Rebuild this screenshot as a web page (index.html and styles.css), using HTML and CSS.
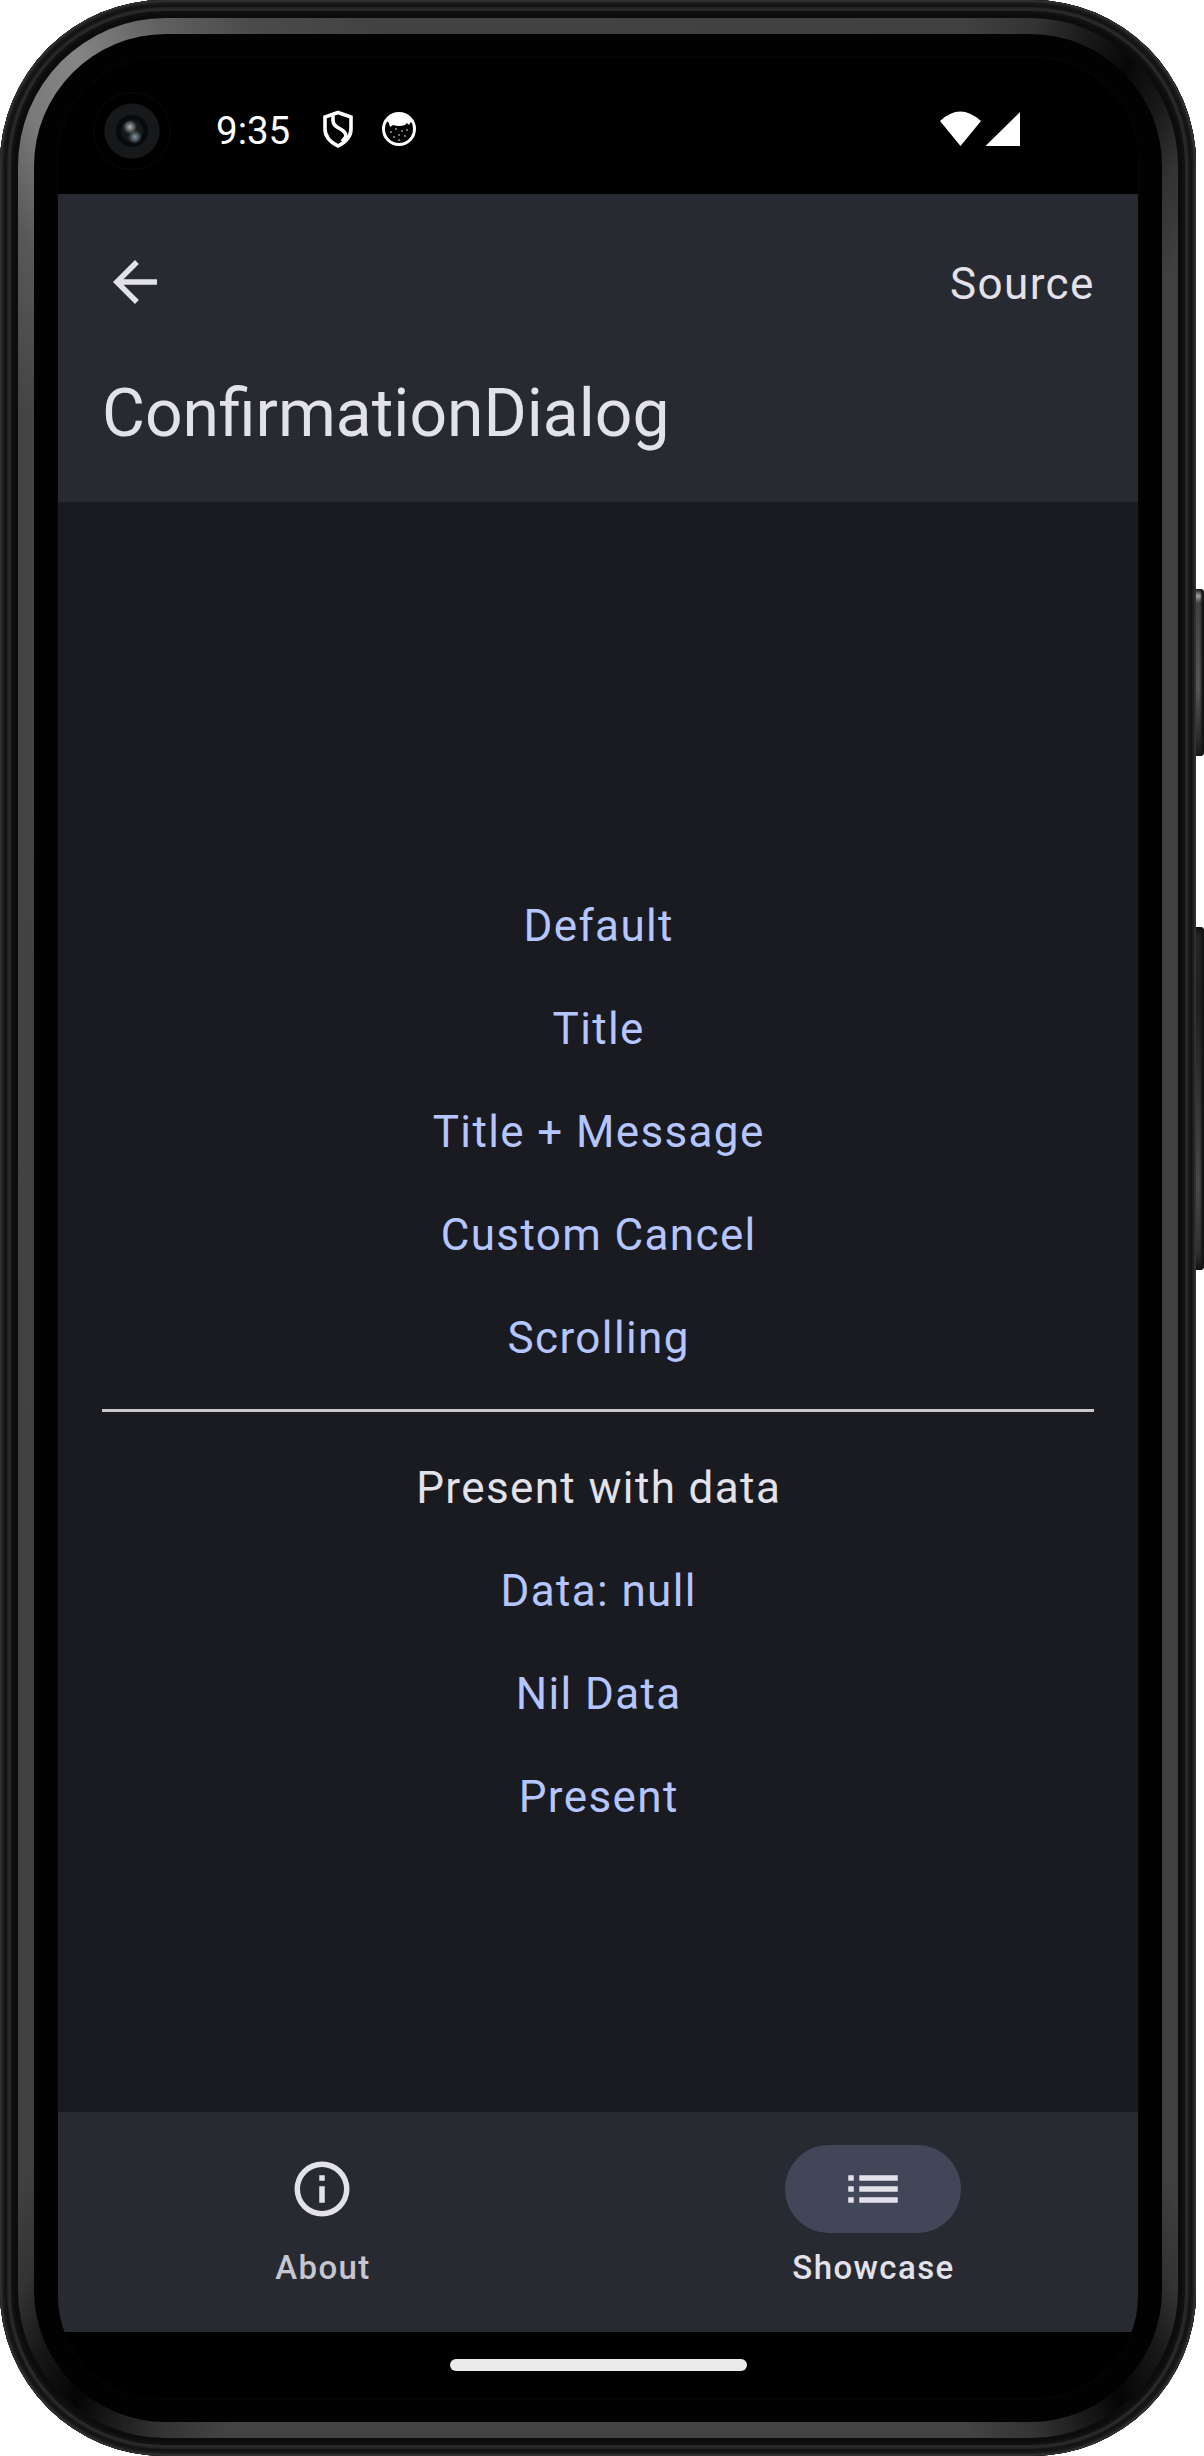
FILE: index.html
```html
<!DOCTYPE html>
<html lang="en">
<head>
<meta charset="utf-8">
<title>ConfirmationDialog</title>
<link rel="stylesheet" href="styles.css">
</head>
<body>
<div class="device">
  <div class="key key-power"></div>
  <div class="key key-volume"></div>
  <div class="shell">
    <div class="rim">
      <div class="glass">
        <div class="screen">
          <header class="status">
            <div class="camera"></div>
            <span class="time">9:35</span>
            <svg class="shield" viewBox="0 0 32 38"><path d="M16 2.500 29 7v12c0 8-6 13.500-13 17C9 32.500 3 27 3 19V7Z" fill="none" stroke="#fff" stroke-width="3.600"/><path d="M11 5.500v5c0 9 13 7 13 16l-4 5" fill="none" stroke="#fff" stroke-width="3.600"/></svg>
            <svg class="cat" viewBox="0 0 36 36"><circle cx="18" cy="18" r="15.500" fill="#000" stroke="#fff" stroke-width="3"/><path d="M5 9A16 16 0 0 1 31 9L28 14 26 12 24 14Q18 16 12 14L9 16 8 12Z" fill="#fff"/><g fill="#fff"><circle cx="10" cy="21" r=".8"/><circle cx="15" cy="18" r=".8"/><circle cx="21" cy="20" r=".8"/><circle cx="26" cy="19" r=".8"/><circle cx="13" cy="26" r=".8"/><circle cx="18" cy="24" r=".8"/><circle cx="24" cy="25" r=".8"/><circle cx="18" cy="29" r=".8"/></g></svg>
            <svg class="signal" viewBox="0 0 80 36"><path d="M0 10Q20-9 41 10L20.500 35Z" fill="#fff"/><path d="M80 1V35H45.500Z" fill="#fff"/></svg>
          </header>
          <div class="appbar">
            <div class="actions">
              <svg class="back" viewBox="0 0 44 44"><path d="M44 19.250H10.530L25.900 3.880 22 0 0 22 22 44 25.880 40.120 10.530 24.750H44Z" fill="#e3e1e9"/></svg>
              <span class="source">Source</span>
            </div>
            <h1>ConfirmationDialog</h1>
          </div>
          <main>
            <a>Default</a>
            <a>Title</a>
            <a>Title + Message</a>
            <a>Custom Cancel</a>
            <a>Scrolling</a>
            <hr>
            <p>Present with data</p>
            <a>Data: null</a>
            <a>Nil Data</a>
            <a>Present</a>
          </main>
          <nav>
            <div class="tab">
              <div class="pill"><svg viewBox="0 0 24 24"><path d="M11 7h2v2h-2zM11 11h2v6h-2zM12 2a10 10 0 1 0 0 20 10 10 0 0 0 0-20zm0 18a8 8 0 1 1 0-16 8 8 0 0 1 0 16z"/></svg></div>
              <span>About</span>
            </div>
            <div class="tab active">
              <div class="pill"><svg viewBox="0 0 24 24"><path d="M3 13h2v-2H3zM3 17h2v-2H3zM3 9h2V7H3zM7 13h14v-2H7zM7 17h14v-2H7zM7 7v2h14V7z"/></svg></div>
              <span>Showcase</span>
            </div>
          </nav>
          <div class="gesture"><div class="handle"></div></div>
        </div>
      </div>
    </div>
  </div>
</div>
</body>
</html>
```
FILE: styles.css
```css
* { box-sizing: border-box; }
body { margin: 0; background: #fff; font-family: Roboto, sans-serif; color: #e3e1e9; }
.device { position: relative; width: 1204px; height: 2456px; }
.shell {
  width: 1196px; height: 2456px; padding: 18px; border-radius: 164px;
  background: #0c0c0c;
  box-shadow: inset 0 0 0 2px #303030, inset 0 0 0 4px #1d1d1d, inset 0 0 0 7px #141414, inset 0 0 0 8px #202020, inset 0 0 0 11px #282828, inset 0 0 0 14px #111;
}
.rim {
  height: 100%; padding: 16px; border-radius: 148px;
  background: conic-gradient(#424242 0deg, #404040 17deg, #333 20deg, #1c1c1c 22deg, #080808 24.500deg, #181818 26.500deg, #333 28.500deg, #404040 31deg, #404040 149deg, #333 151.500deg, #181818 153.500deg, #050505 156deg, #1c1c1c 158deg, #333 160deg, #444 163deg, #444 197deg, #333 200deg, #1c1c1c 202deg, #050505 204deg, #181818 206.500deg, #333 208.500deg, #404040 211deg, #444 325deg, #585858 330deg, #7a7a7a 333deg, #858585 336deg, #606060 340deg, #4a4a4a 344deg, #424242 350deg);
}
.glass { height: 100%; padding: 24px; border-radius: 132px; background: #020202; }
.screen {
  display: flex; flex-direction: column; width: 1080px; height: 2340px;
  border-radius: 102px; overflow: hidden; background: #000; box-shadow: 0 0 0 1px #070707;
}
.status { display: flex; align-items: center; height: 136px; padding: 6px 118px 0 35px; }
.camera {
  flex: none; width: 78px; height: 78px; margin-top: 4px; border: 1px solid #0b0b0b; border-radius: 50%;
  background:
    radial-gradient(circle 7px at 36px 34px, #b4b4b4, #77777700),
    radial-gradient(circle 7px at 41px 44px, #81969f, #40505800),
    radial-gradient(circle, #16191c 0 10px, #07090b 12px 15px, #17181a 17px 27px, #000 28px);
}
.time { margin: 3px 0 0 45px; font-size: 38.500px; color: #fff; }
.shield { width: 32px; height: 38px; margin-left: 32px; }
.cat { width: 36px; height: 36px; margin-left: 27px; }
.signal { width: 80px; height: 36px; margin-left: auto; }
.appbar { height: 308px; padding: 60px 44px 0; background: #282a32; }
.actions { display: flex; align-items: center; justify-content: space-between; height: 56px; padding-left: 11px; font-size: 44px; letter-spacing: 1.375px; }
.back { width: 44px; height: 44px; }
.source { padding-top: 4px; margin-right: -.7px; }
h1 { margin: 60px 0 0; font-size: 66px; line-height: 87px; font-weight: 400; }
main {
  display: flex; flex-direction: column; align-items: center;
  height: 1610px; padding: 373px 44px 0; background: #1a1b21; font-size: 44px; line-height: 66px; letter-spacing: 1.375px;
}
main a, main p { margin: 18px 0 19px; padding-left: 1.375px; }
main a { color: #b4c5ff; }
main hr { width: 100%; height: 3px; margin: 19px 0 25px; border: 0; background: #c8c8c9; }
nav { display: flex; gap: 22px; height: 220px; padding: 33px 1px 0 0; background: #282a32; }
.tab { flex: 1; display: flex; flex-direction: column; align-items: center; gap: 12px; font-size: 33px; line-height: 45px; font-weight: 500; letter-spacing: 1.375px; color: #c6c6d0; }
.tab span { padding-left: 1.375px; }
.active { color: #e3e1e9; }
.pill { display: flex; align-items: center; justify-content: center; width: 176px; height: 88px; border-radius: 44px; }
.active .pill { background: #424659; }
.pill svg { width: 66px; height: 66px; fill: #e3e1e9; }
.gesture { display: flex; justify-content: center; align-items: center; height: 66px; }
.handle { width: 297px; height: 12px; border-radius: 6px; background: #ebebeb; }
.key { position: absolute; left: 1196px; width: 8px; border-radius: 0 4px 4px 0; }
.key-power { top: 589px; height: 167px; background: linear-gradient(#1a1a1a, #a0a0a0 7px, #404040 14px, #484848 40px, #555 100px, #2a2a2a 150px, #1a1a1a); box-shadow: inset -3px 0 2px #151515; }
.key-volume { top: 927px; height: 343px; background: linear-gradient(#111, #252525 10px, #202020 80px, #484848 260px, #303030 325px, #111); box-shadow: inset -3px 0 2px #151515; }
```
